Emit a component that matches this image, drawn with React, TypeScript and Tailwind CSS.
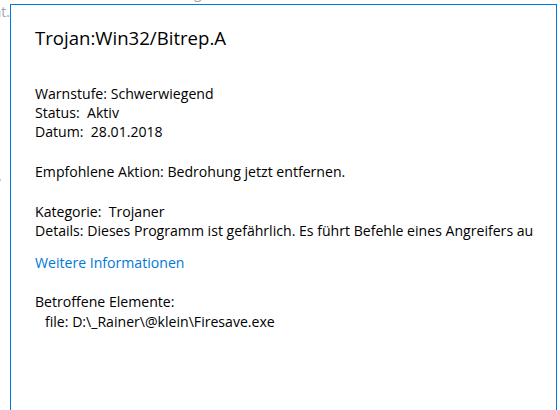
export default function App() {
  return (
    <div className="relative h-[410px] w-[560px] overflow-hidden bg-white font-['Open_Sans',sans-serif] text-[14px] text-black">
      {/* page behind the dialog */}
      <p className="absolute left-[-40px] top-[-17px] whitespace-nowrap text-[14px] leading-[19px] text-[#a6a6a6]">
        Antivirus hat auf Ihrem Gerät die folgenden
      </p>
      <p className="absolute right-[550px] top-[2px] whitespace-nowrap text-[14px] leading-[19px] text-[#a6a6a6]">
        Bedrohungen erkannt.
      </p>
      <div className="absolute left-[-8px] top-[166px] text-[14px] leading-[19px] text-[#a6a6a6]">A</div>

      {/* dialog window */}
      <div className="absolute left-[10px] top-[4px] h-[440px] w-[547px] border border-[#0078d7] bg-white">
        <div className="flex flex-col pl-6 pr-[22px] pt-5 text-[14.1px] leading-[19px]">
          <h1 className="text-[18.6px] leading-[26px]">Trojan:Win32/Bitrep.A</h1>

          <div className="mt-[33px] flex flex-col">
            <p>Warnstufe: Schwerwiegend</p>
            <p>Status:&nbsp; Aktiv</p>
            <p>Datum:&nbsp; 28.01.2018</p>
          </div>

          <p className="mt-[21px]">Empfohlene Aktion: Bedrohung jetzt entfernen.</p>

          <div className="mt-[21px] flex flex-col">
            <p>Kategorie:&nbsp; Trojaner</p>
            <p className="overflow-hidden whitespace-nowrap">
              Details: Dieses Programm ist gefährlich. Es führt Befehle eines Angreifers aus.
            </p>
          </div>

          <a className="mt-[13px] text-[#0078d7]">Weitere Informationen</a>

          <div className="mt-[20px] flex flex-col leading-[20px]">
            <p>Betroffene Elemente:</p>
            <p className="pl-[10px]">file: D:\_Rainer\@klein\Firesave.exe</p>
          </div>
        </div>
      </div>
    </div>
  );
}
